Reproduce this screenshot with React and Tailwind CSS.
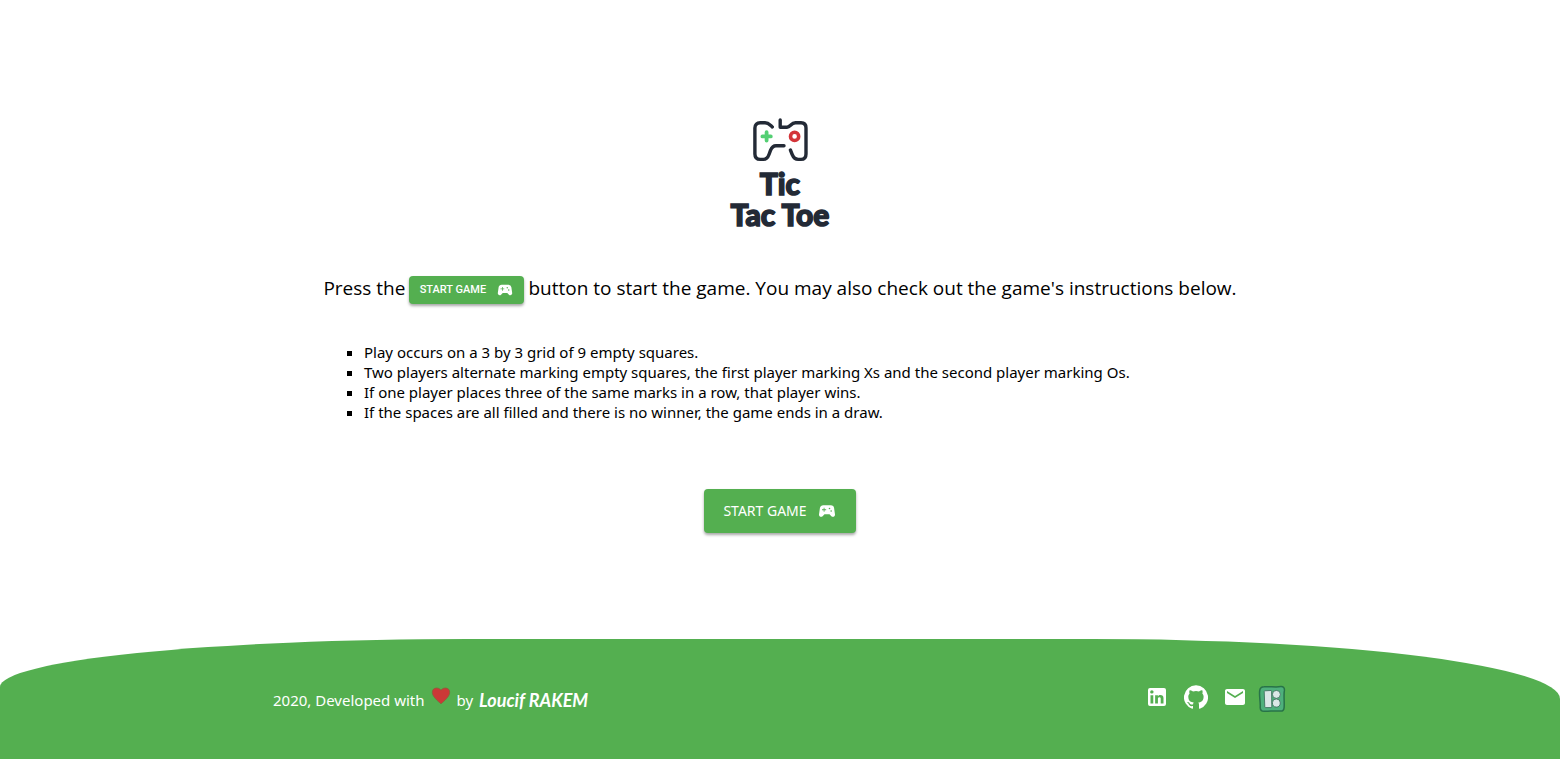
import { MdEmail, MdSportsEsports } from "react-icons/md";

const rules = [
  "Play occurs on a 3 by 3 grid of 9 empty squares.",
  "Two players alternate marking empty squares, the first player marking Xs and the second player marking Os.",
  "If one player places three of the same marks in a row, that player wins.",
  "If the spaces are all filled and there is no winner, the game ends in a draw.",
];

function Logo() {
  return (
    <div className="flex flex-col items-center">
      <svg width="58" height="46" viewBox="0 0 58 46" fill="none" strokeLinecap="round" strokeLinejoin="round" aria-hidden="true">
        <g stroke="#232a36" strokeWidth="3.4">
          <path d="M21.3 9 C18.5 6.6 17.5 4.8 14 4.8 H9.2 C5.8 4.8 3.9 6.8 3.9 10 V36 C3.9 39.4 6 41.4 9.2 41.4 H12.4 C15.4 41.4 16.8 39.8 18 36.5 L19.5 32.4 C20.7 29.4 22 27.8 25 27.8 H33" />
          <path d="M29.2 2 V9.2 H36 C39.5 9.2 39.8 4.8 44.5 4.8 H50 C53.3 4.8 55 6.8 55 10 V36 C55 39.4 53.2 41.4 50 41.4 H47.2 C44 41.4 42.4 39.4 41.2 36.5 L39.4 32" />
        </g>
        <path d="M15.6 14.2 V22.6 M11.4 18.4 H19.8" stroke="#54cf73" strokeWidth="3.8" />
        <circle cx="43.6" cy="18.4" r="4.1" stroke="#d33439" strokeWidth="3.6" />
      </svg>
      <h1 className="mt-1 text-center font-[Lato,sans-serif] text-[30px] font-black leading-[31px] text-[#232a36] [-webkit-text-stroke:1.5px_#232a36]">
        Tic
        <br />
        Tac Toe
      </h1>
    </div>
  );
}

function Icons8() {
  return (
    <svg width="28" height="28" viewBox="0 0 28 28" aria-hidden="true">
      <path d="M6 1.8 C11 1.2 18 2.6 22.8 1.6 Q26.8 1.4 26.4 5.4 C25.5 11 26.6 17 26.1 22.6 Q25.8 26.4 22.4 26.1 C17 25.4 11 26.6 6 26.3 Q2.2 26.2 2.2 22.4 C2.6 17 1 11 1.7 5.6 Q2.2 2 6 1.8Z" fill="#4eb07c" stroke="#287348" strokeWidth="1.5" />
      <g fill="#dbe7e7" stroke="#3f7360" strokeWidth="0.9">
        <path d="M7 5.8 L13 5.5 Q13.6 5.5 13.6 6.2 L13.8 22 Q13.8 22.6 13 22.6 L7.6 22.6 Q6.8 22.6 6.8 22 L6.2 6.5 Q6.2 5.8 7 5.8Z" />
        <circle cx="18.4" cy="9.4" r="4" />
        <path d="M14.4 17.7 Q14.4 13.9 18.3 13.9 Q22.3 14 22.3 17.9 Q22.1 22.1 18.3 22.1 Q14.4 22 14.4 17.7Z" />
      </g>
    </svg>
  );
}

function Footer() {
  return (
    <footer className="flex h-[120px] justify-center rounded-[30%_30%_0_0/40%_50%_0_0] bg-[#54af50] text-white">
      <div className="flex w-[65%] items-center justify-between">
        <p className="flex items-center gap-1.5 pt-0.5">
          <span>2020, Developed with</span>
          <svg className="mb-2" width="20" height="20" viewBox="0 0 20 20" role="img" aria-label="love">
            <path d="M10 17.8 C7 15.2 1.6 10.8 1.3 6.8 C1 3.8 3 2 5.6 2 C7.7 2 9.1 3 10 4.2 C10.9 3 12.3 2 14.4 2 C17 2 19 3.8 18.7 6.8 C18.4 10.8 13 15.2 10 17.8Z" fill="#cb3837" stroke="#876238" strokeWidth="0.8" />
          </svg>
          <span>by</span>
          <a href="#author" className="font-[Lato,sans-serif] text-[18px] font-bold italic leading-6">Loucif RAKEM</a>
        </p>
        <nav aria-label="Contact" className="flex items-center gap-[15px] pb-1 pr-px">
          <a href="#linkedin" aria-label="LinkedIn">
            <svg width="24" height="24" viewBox="0 0 24 24" fill="currentColor"><path d="M19 3a2 2 0 0 1 2 2v14a2 2 0 0 1-2 2H5a2 2 0 0 1-2-2V5a2 2 0 0 1 2-2h14m-.5 15.5v-5.3a3.26 3.26 0 0 0-3.26-3.26c-.85 0-1.84.52-2.32 1.3v-1.11h-2.79v8.37h2.79v-4.93c0-.77.62-1.4 1.39-1.4a1.4 1.4 0 0 1 1.4 1.4v4.93h2.79M6.88 8.56a1.68 1.68 0 0 0 1.68-1.68c0-.93-.75-1.69-1.68-1.69a1.69 1.69 0 0 0-1.69 1.69c0 .93.76 1.68 1.69 1.68m1.39 9.94v-8.37H5.5v8.37h2.77z" /></svg>
          </a>
          <a href="#github" aria-label="GitHub">
            <svg width="24" height="24" viewBox="0 0 24 24" fill="currentColor"><path d="M12 .3a12 12 0 0 0-3.8 23.4c.6.1.8-.3.8-.6v-2c-3.3.7-4-1.6-4-1.6-.6-1.4-1.4-1.8-1.4-1.8-1-.7.1-.7.1-.7 1.2 0 1.9 1.2 1.9 1.2 1 1.8 2.8 1.3 3.5 1 0-.8.4-1.3.7-1.6-2.7-.3-5.5-1.3-5.5-6 0-1.2.5-2.3 1.3-3.1-.2-.4-.6-1.6 0-3.2 0 0 1-.3 3.4 1.2a11.5 11.5 0 0 1 6 0c2.3-1.5 3.3-1.2 3.3-1.2.6 1.6.2 2.8 0 3.2.9.8 1.3 1.9 1.3 3.2 0 4.6-2.8 5.6-5.5 5.9.5.4.9 1 .9 2.2v3.3c0 .3.1.7.8.6A12 12 0 0 0 12 .3" /></svg>
          </a>
          <a href="#mail" aria-label="Email"><MdEmail size={24} /></a>
          <a href="#icons8" aria-label="Icons8" className="-ml-1 pt-1"><Icons8 /></a>
        </nav>
      </div>
    </footer>
  );
}

export default function App() {
  return (
    <div className="flex min-h-screen flex-col bg-white font-['Noto_Sans',sans-serif] text-[15px] leading-5 text-black">
      <main className="mx-auto flex w-full max-w-[960px] grow flex-col items-center pt-[118px]">
        <Logo />
        <div className="mt-[42px] flex w-full flex-wrap items-center justify-center gap-1 font-['Open_Sans',sans-serif] text-[19px] leading-7">
          <span>Press the</span>
          <button type="button" className="mt-1 flex h-7 w-[115px] items-center justify-center gap-2.5 rounded bg-[#54af50] font-[Roboto,sans-serif] text-[11px] font-medium text-white shadow-[0_2px_3px_rgba(0,0,0,0.35)]">
            START GAME
            <MdSportsEsports size={18} />
          </button>
          <span>button to start the game. You may also check out the game's instructions below.</span>
        </div>
        <ul className="mt-[38px] w-full list-[square] pl-16">
          {rules.map((rule) => (
            <li key={rule}>{rule}</li>
          ))}
        </ul>
        <button type="button" className="mt-[67px] flex h-11 w-[152px] items-center justify-center gap-2.5 rounded bg-[#54af50] text-[14px] text-white shadow-[0_2px_3px_rgba(0,0,0,0.35)]">
          START GAME
          <MdSportsEsports size={20} />
        </button>
      </main>
      <Footer />
    </div>
  );
}
